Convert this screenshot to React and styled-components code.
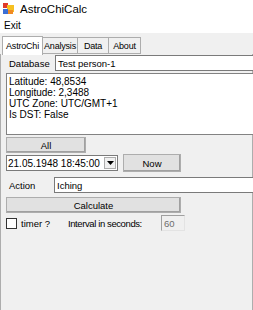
import React from "react";
import styled, { createGlobalStyle } from "styled-components";

const Global = createGlobalStyle`
  html, body { margin: 0; padding: 0; background: #ffffff; }
  body { font-family: "Liberation Sans", Arial, sans-serif; font-size: 9.5px; color: #000; }
`;

const Window = styled.div`
  width: 253px;
  height: 310px;
  overflow: hidden;
  background: #ffffff;
  display: flex;
  flex-direction: column;
`;

const TitleBar = styled.div`
  height: 17px;
  display: flex;
  align-items: center;
  padding-left: 3px;
  gap: 6px;
  font-size: 11.5px;
`;

const MenuBar = styled.div`
  height: 16px;
  display: flex;
  align-items: center;
  padding-left: 4px;
  font-size: 10px;
`;

const TabStrip = styled.div`
  height: 21px;
  background: #f0f0f0;
  display: flex;
  align-items: flex-end;
  padding-left: 2px;
  box-sizing: border-box;
`;

const Tab = styled.div`
  width: ${(p) => p.$w}px;
  height: ${(p) => (p.$active ? 19 : 17)}px;
  box-sizing: border-box;
  display: flex;
  align-items: center;
  justify-content: center;
  font-size: 9px;
  letter-spacing: -0.2px;
  white-space: nowrap;
  background: ${(p) => (p.$active ? "#ffffff" : "#f0f0f0")};
  border: 1px solid #adadad;
  border-bottom: ${(p) => (p.$active ? "none" : "1px solid #adadad")};
  margin-left: ${(p) => (p.$active ? 0 : -1)}px;
  margin-bottom: ${(p) => (p.$active ? -1 : 0)}px;
  position: relative;
  z-index: ${(p) => (p.$active ? 1 : 0)};
`;

const TabPage = styled.div`
  flex: 1;
  background: #f0f0f0;
  border-left: 1px solid #adadad;
  border-right: 1px solid #adadad;
  padding: 1px 0 0 5px;
  display: flex;
  flex-direction: column;
  align-items: flex-start;
`;

const Row = styled.div`
  display: flex;
  align-items: center;
  margin-top: ${(p) => p.$mt || 0}px;
`;

const Label = styled.span`
  width: ${(p) => p.$w}px;
  padding-left: ${(p) => p.$pl || 0}px;
  letter-spacing: ${(p) => p.$ls || 0}px;
  flex: none;
  white-space: nowrap;
`;

const TextBox = styled.div`
  height: 16px;
  width: ${(p) => p.$w}px;
  box-sizing: border-box;
  border: 1px solid #7a7a7a;
  background: ${(p) => (p.$disabled ? "#f0f0f0" : "#ffffff")};
  color: ${(p) => (p.$disabled ? "#6d6d6d" : "#000")};
  border-color: ${(p) => (p.$disabled ? "#a0a0a0 #e3e3e3 #e3e3e3 #a0a0a0" : "#7a7a7a")};
  display: flex;
  align-items: center;
  padding-left: 2px;
  flex: none;
  white-space: nowrap;
`;

const MultiLine = styled.div`
  margin-top: 2px;
  width: 260px;
  height: 62px;
  box-sizing: border-box;
  background: #ffffff;
  border: 1px solid #828282;
  padding: 2px 2px;
  line-height: 11px;
  font-size: 10px;
`;

const Button = styled.div`
  width: ${(p) => p.$w}px;
  height: ${(p) => p.$h || 16}px;
  margin-top: ${(p) => p.$mt || 0}px;
  margin-left: ${(p) => p.$ml || 0}px;
  box-sizing: border-box;
  background: #e1e1e1;
  border: 1px solid #adadad;
  box-shadow: inset -1px -1px 0 #a0a0a0;
  display: flex;
  align-items: center;
  justify-content: center;
  flex: none;
`;

const Picker = styled.div`
  width: 112px;
  height: 16px;
  box-sizing: border-box;
  background: #ffffff;
  border: 1px solid #7a7a7a;
  display: flex;
  align-items: center;
  justify-content: space-between;
  padding-left: 1px;
  flex: none;
  white-space: nowrap;
  font-size: 10px;
`;

const DropBtn = styled.div`
  width: 12px;
  height: 12px;
  margin-right: 1px;
  box-sizing: border-box;
  border: 1px solid #adadad;
  background: #f0f0f0;
  display: flex;
  align-items: center;
  justify-content: center;
`;

const Check = styled.div`
  width: 11px;
  height: 11px;
  box-sizing: border-box;
  background: #ffffff;
  border: 1px solid #333;
  flex: none;
`;

const Icon = () => (
  <svg width="11" height="11" viewBox="0 0 11 11">
    <rect x="0" y="0" width="5" height="5" fill="#e03a2a" />
    <rect x="4" y="2" width="7" height="7" fill="#f6c021" />
    <rect x="0" y="6" width="5" height="5" fill="#3b6fd6" />
    <rect x="5" y="7" width="5" height="4" fill="#f08a24" />
  </svg>
);

export default function App() {
  return (
    <>
      <Global />
      <Window>
        <TitleBar>
          <Icon />
          <span>AstroChiCalc</span>
        </TitleBar>
        <MenuBar>Exit</MenuBar>
        <TabStrip>
          <Tab $active $w={41}>AstroChi</Tab>
          <Tab $w={36}>Analysis</Tab>
          <Tab $w={32}>Data</Tab>
          <Tab $w={33}>About</Tab>
        </TabStrip>
        <TabPage>
          <Row>
            <Label $w={46} $pl={3}>Database</Label>
            <TextBox $w={220}>Test person-1</TextBox>
          </Row>
          <MultiLine>
            <div>Latitude: 48,8534</div>
            <div>Longitude: 2,3488</div>
            <div>UTC Zone: UTC/GMT+1</div>
            <div>Is DST: False</div>
          </MultiLine>
          <Button $w={80} $mt={2}>All</Button>
          <Row $mt={1}>
            <Picker>
              <span>21.05.1948 18:45:00</span>
              <DropBtn>
                <svg width="7" height="4" viewBox="0 0 7 4">
                  <path d="M0 0h7L3.5 4z" fill="#000" />
                </svg>
              </DropBtn>
            </Picker>
            <Button $w={58} $h={18} $ml={5}>Now</Button>
          </Row>
          <Row $mt={5}>
            <Label $w={45} $pl={3}>Action</Label>
            <TextBox $w={220}>Iching</TextBox>
          </Row>
          <Button $w={175} $mt={4}>Calculate</Button>
          <Row $mt={2}>
            <Check />
            <Label $w={47} $pl={4}>timer ?</Label>
            <Label $w={93} $ls={-0.4}>Interval in seconds:</Label>
            <TextBox $w={24} $disabled>60</TextBox>
          </Row>
        </TabPage>
      </Window>
    </>
  );
}
